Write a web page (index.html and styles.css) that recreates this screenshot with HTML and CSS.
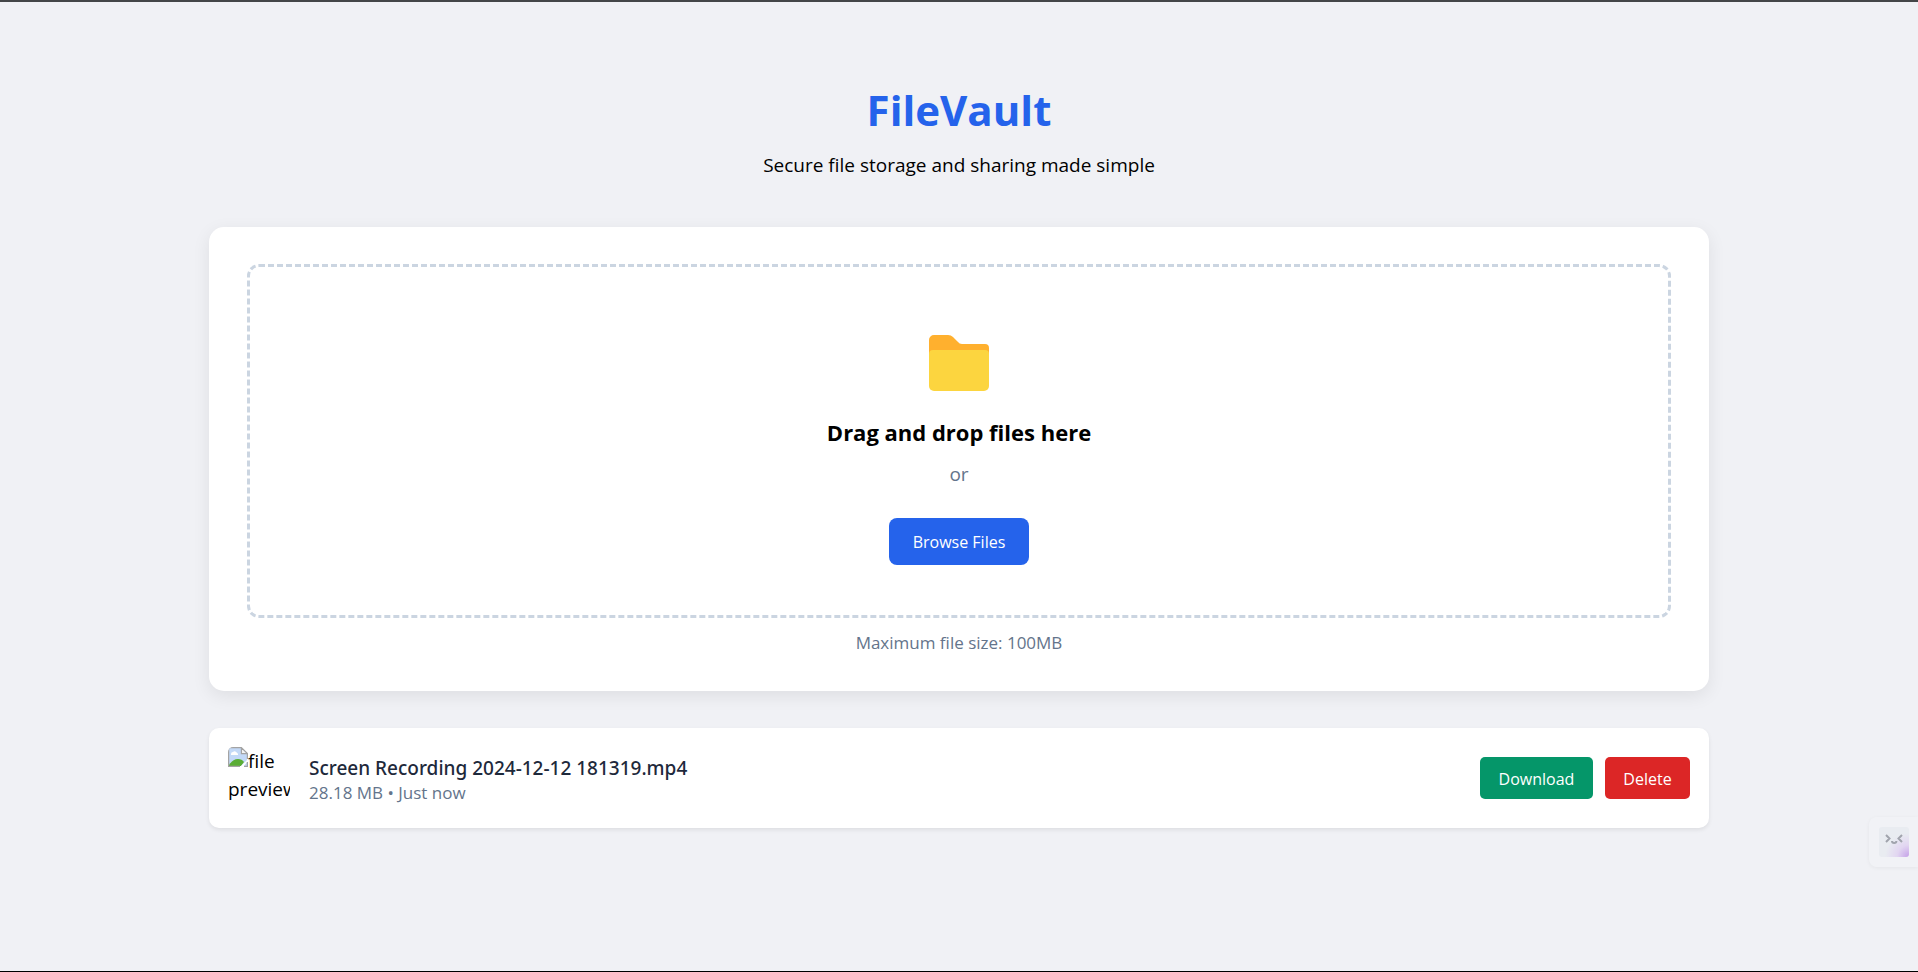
FILE: index.html
```html
<!DOCTYPE html>
<html lang="en">
<head>
<meta charset="utf-8">
<meta name="viewport" content="width=device-width, initial-scale=1">
<title>FileVault</title>
<link rel="stylesheet" href="styles.css">
</head>
<body>
<main class="container">
  <header class="header">
    <h1 class="title">FileVault</h1>
    <p class="subtitle">Secure file storage and sharing made simple</p>
  </header>

  <section class="upload-card">
    <div class="dropzone">
      <svg class="folder" width="60" height="56" viewBox="0 0 60 56" aria-hidden="true">
        <path fill="#ffb02e" d="M0 5a5 5 0 0 1 5-5h14q3 0 5 2l4.500 4.500q2 2.500 4.500 2.500h23a4 4 0 0 1 4 4v12H0z"/>
        <path fill="#fcd53f" d="M0 19a4 4 0 0 1 4-4h52a4 4 0 0 1 4 4v32a5 5 0 0 1-5 5H5a5 5 0 0 1-5-5z"/>
      </svg>
      <h2 class="drop-title">Drag and drop files here</h2>
      <p class="drop-or">or</p>
      <button class="btn btn-browse" type="button">Browse Files</button>
    </div>
    <p class="limit">Maximum file size: 100MB</p>
  </section>

  <ul class="file-list">
    <li class="file-item">
      <div class="preview"><svg class="broken" width="20" height="20" viewBox="0 0 20 20" aria-hidden="true">
          <path fill="#c3d9f7" d="M1 1h12l6 6v12H1z"/>
          <path fill="#fff" d="M3 7a2 2 0 0 1 2-2 2.500 2.500 0 0 1 4 1 1.500 1.500 0 0 1 1 2H3z"/>
          <path fill="#5aad35" d="M1 19v-1q4-6 9-6 4 0 6 3l-3 4z"/>
          <path fill="#fff" d="M12 20l8-8v2l-5 6z"/>
          <path fill="#f4f4f4" d="M13 1v6h6z"/>
          <path fill="none" stroke="#a3a3a3" stroke-width="1.200" d="M12 19.400H.6V2Q.6.6 2 .6h11.400l6 6V12M13.400.6v6h6M16 19.400h3.400V15"/>
        </svg>file preview</div>
      <div class="file-info">
        <h3 class="file-name">Screen Recording 2024-12-12 181319.mp4</h3>
        <p class="file-meta">28.18 MB • Just now</p>
      </div>
      <div class="actions">
        <button class="btn btn-download" type="button">Download</button>
        <button class="btn btn-delete" type="button">Delete</button>
      </div>
    </li>
  </ul>
</main>

<button class="assistant" type="button" aria-label="Open assistant">
  <svg class="face" width="30" height="30" viewBox="0 0 30 30" aria-hidden="true">
    <defs>
      <radialGradient id="glow" cx="1" cy="1" r="0.8">
        <stop offset="0" stop-color="#c4a0e8"/>
        <stop offset="0.500" stop-color="#e2d6f1"/>
        <stop offset="1" stop-color="#e9ecf1"/>
      </radialGradient>
    </defs>
    <rect width="30" height="30" rx="3" fill="url(#glow)"/>
    <path fill="none" stroke="#a1a4ad" stroke-width="2" d="M7 8l3.500 3.500L7 15M23 8l-3.500 3.500L23 15M13 14q0 2 2.200 2t2.200-2"/>
  </svg>
</button>
</body>
</html>
```

FILE: styles.css
```css
* {
  box-sizing: border-box;
  margin: 0;
  padding: 0;
}

body {
  min-height: 100vh;
  border-top: 2px solid #444648;
  border-bottom: 1px solid #000;
  background: #f0f1f5;
  color: #000;
  font-family: "Open Sans", "Noto Sans", sans-serif;
  font-size: 19px;
  line-height: 30px;
}

.container {
  max-width: 1540px;
  margin: 0 auto;
  padding: 78px 20px 40px;
}

.header {
  margin-bottom: 47px;
  text-align: center;
}

.title {
  margin-bottom: 10px;
  color: #2563eb;
  font-size: 42px;
  font-weight: 700;
  line-height: 60px;
}

.upload-card {
  margin-bottom: 37px;
  padding: 37px 38px 36px;
  border-radius: 15px;
  background: #fff;
  box-shadow: 0 5px 18px rgba(0, 0, 0, 0.08);
  text-align: center;
}

.dropzone {
  display: flex;
  flex-direction: column;
  align-items: center;
  padding: 50px;
  border: 3px dashed #cbd5e1;
  border-radius: 12px;
}

.folder {
  margin: 18px 0 22px;
}

.drop-title {
  margin-bottom: 8px;
  font-size: 22px;
  font-weight: 700;
  line-height: 38px;
}

.drop-or {
  margin-bottom: 29px;
  color: #64748b;
}

.limit {
  margin-top: 13px;
  color: #64748b;
  font-size: 17px;
  line-height: 24px;
}

.btn {
  border: 0;
  border-radius: 5px;
  color: #fff;
  font-family: inherit;
  font-size: 16px;
  line-height: 22px;
  cursor: pointer;
}

.btn-browse {
  min-width: 140px;
  padding: 13px 23px 12px;
  border-radius: 8px;
  background: #2563eb;
}

.file-list {
  list-style: none;
}

.file-item {
  display: flex;
  align-items: center;
  gap: 19px;
  padding: 19px;
  border-radius: 10px;
  background: #fff;
  box-shadow: 0 2px 4px rgba(0, 0, 0, 0.08);
}

.preview {
  flex: none;
  width: 62px;
  height: 62px;
  overflow: hidden;
  border-radius: 5px;
  line-height: 28px;
}

.broken {
  vertical-align: top;
}

.file-info {
  flex: 1;
  min-width: 0;
  padding-top: 5px;
}

.file-name {
  color: #1e293b;
  font-family: "Noto Sans", "Open Sans", sans-serif;
  font-size: 19px;
  font-weight: 500;
  line-height: 25px;
}

.file-meta {
  color: #64748b;
  font-size: 17px;
  line-height: 24px;
}

.actions {
  display: flex;
  gap: 12px;
}

.btn-download,
.btn-delete {
  padding: 11px 18px 9px;
}

.btn-download {
  min-width: 113px;
  background: #059669;
}

.btn-delete {
  min-width: 85px;
  background: #dc2626;
}

.assistant {
  position: fixed;
  right: 0;
  bottom: 105px;
  padding: 10px 9px 10px 10px;
  border: 0;
  border-radius: 8px 0 0 8px;
  background: #f1f2f6;
  box-shadow: 0 1px 4px rgba(0, 0, 0, 0.05);
}

.face {
  display: block;
}
```
